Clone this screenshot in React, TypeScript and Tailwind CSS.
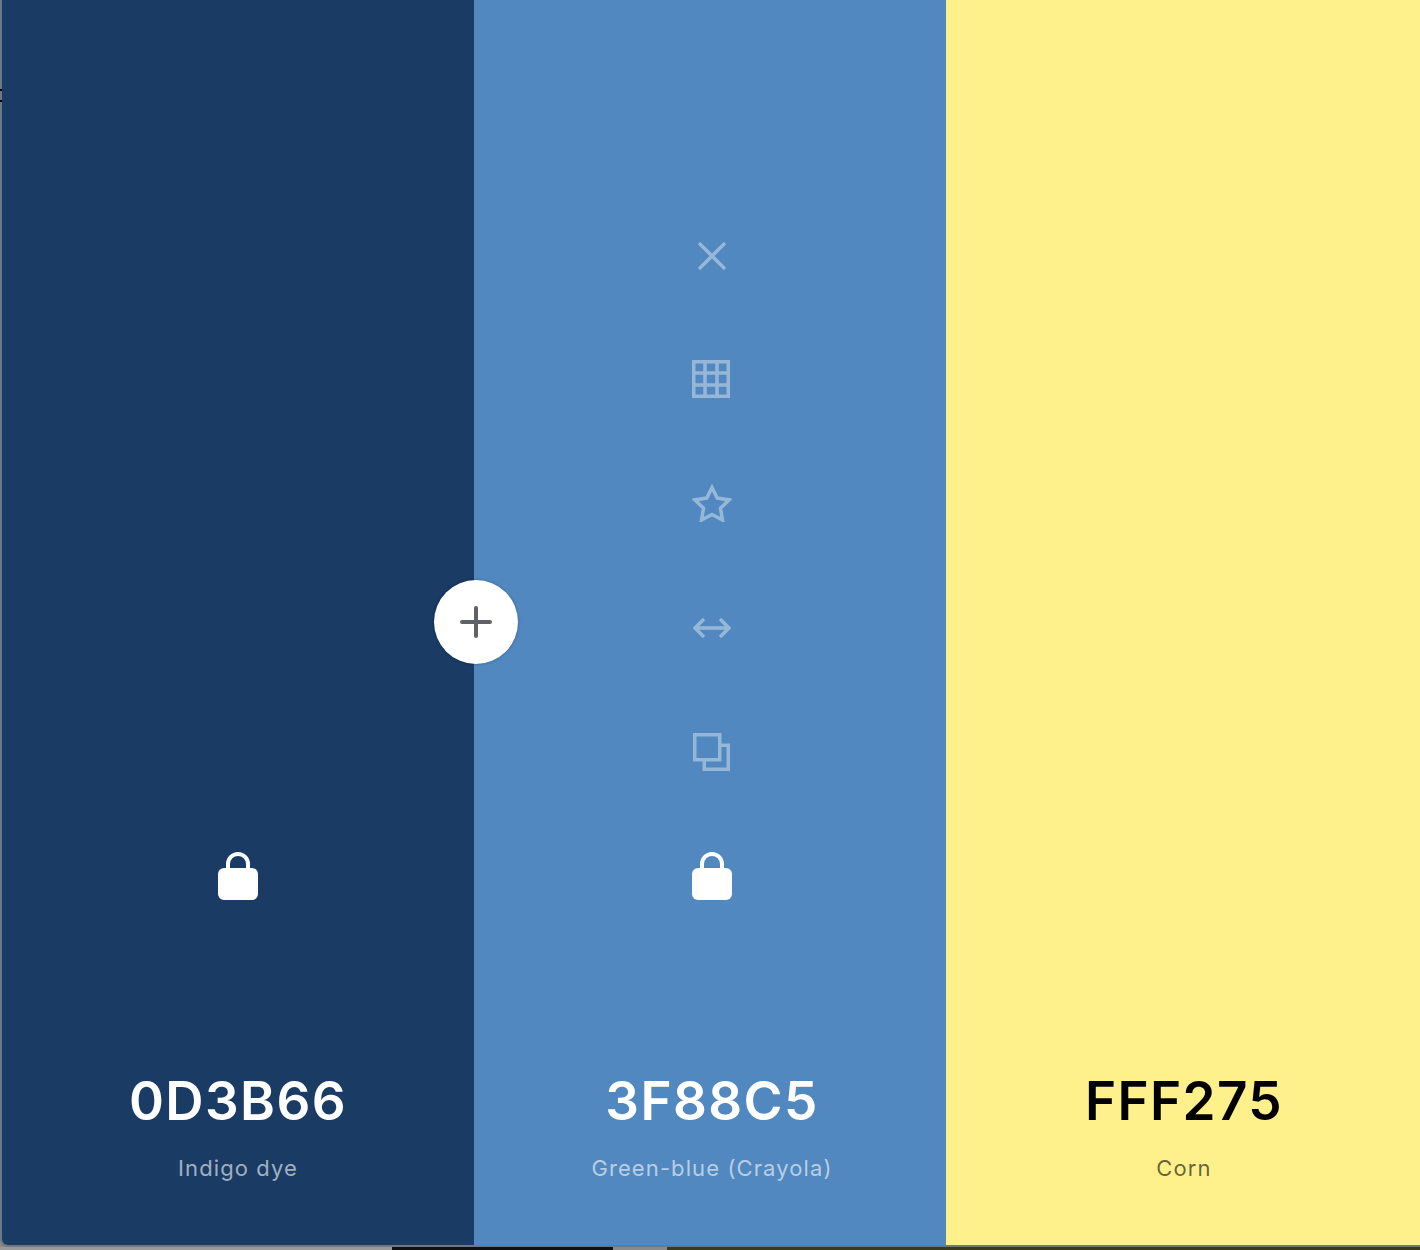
const font = { fontFamily: "Inter, sans-serif" };

const LockIcon = () => (
  <svg width="40" height="48" viewBox="0 0 40 48" className="block">
    <path d="M10 18V12a10 10 0 0 1 20 0v6" fill="none" stroke="#fff" strokeWidth="4" />
    <rect x="0" y="16" width="40" height="32" rx="6" fill="#fff" />
  </svg>
);

const tools = [
  // close
  <svg key="x" width="30" height="28" viewBox="0 0 30 28" fill="none" stroke="#fff" strokeWidth="3.500">
    <path d="M2 1l26 26M28 1L2 27" />
  </svg>,
  // grid
  <svg key="grid" width="38" height="38" viewBox="0 0 38 38" fill="none" stroke="#fff" strokeWidth="3.500" className="mr-[2px] mb-[2px]">
    <path d="M1.750 1.750h34.500v34.500H1.750zM13 1.750v34.500M25 1.750v34.500M1.750 13h34.500M1.750 25h34.500" />
  </svg>,
  // star
  <svg key="star" width="40" height="38" viewBox="0 0 40 38" fill="none" stroke="#fff" strokeWidth="3.500" className="mb-[2px]">
    <path d="M20 3.500l5.200 10.600 11.800 1.800-8.500 8.300 2 11.800L20 30.400 9.500 36l2-11.800L3 15.900l11.800-1.800z" />
  </svg>,
  // arrows
  <svg key="arrows" width="38" height="22" viewBox="0 0 38 22" fill="none" stroke="#fff" strokeWidth="3.500">
    <path d="M2 11h34M11 2l-9 9 9 9M27 2l9 9-9 9" />
  </svg>,
  // copy
  <svg key="copy" width="38" height="38" viewBox="0 0 38 38" fill="none" stroke="#fff" strokeWidth="3.500">
    <path d="M1.750 1.750h25v25h-25zM26.750 12.250h8.500v24h-24v-9.500" />
  </svg>,
];

const Column = ({
  hex,
  name,
  bg,
  dark,
  locked,
  showTools,
  inset,
}: {
  hex: string;
  name: string;
  bg: string;
  dark?: boolean;
  locked?: boolean;
  showTools?: boolean;
  inset?: string;
}) => (
  <div className={`flex flex-1 flex-col items-center justify-end pb-[61px] ${bg} ${inset ?? ""}`}>
    {showTools && (
      <div className="flex flex-col items-center opacity-40">
        {tools.map((icon, i) => (
          <div key={i} className="flex h-[124px] items-center justify-center">
            {icon}
          </div>
        ))}
      </div>
    )}
    {locked && (
      <div className={showTools ? "mt-[38px] mb-[169px]" : "mb-[169px]"}>
        <LockIcon />
      </div>
    )}
    <div
      className={`h-[64px] text-[53px] leading-[64px] font-semibold tracking-[0.026em] ${dark ? "text-black" : "text-white"}`}
    >
      {hex}
    </div>
    <div
      className={`mt-[19px] h-[32px] text-[22px] leading-[32px] tracking-[0.05em] ${dark ? "text-black/60" : "text-white/60"}`}
    >
      {name}
    </div>
  </div>
);

export default function App() {
  return (
    <div className="relative flex h-[1250px] w-[1420px] flex-col overflow-hidden bg-[#8a8a8a]" style={font}>
      <div className="flex min-h-0 flex-1 overflow-hidden rounded-bl-[8px] border-b-2 border-l-2 border-[#6f7782]">
        <div className="flex w-[472px]">
          <Column hex="0D3B66" name="Indigo dye" bg="bg-[#193b64]" locked />
        </div>
        <div className="flex w-[472px]">
          <Column hex="3F88C5" name="Green-blue (Crayola)" bg="bg-[#5088bf]" locked showTools inset="pl-[4px]" />
        </div>
        <div className="flex w-[474px]">
          <Column hex="FFF275" name="Corn" bg="bg-[#fef08a]" dark inset="pl-[2px]" />
        </div>
      </div>
      <div className="flex h-[3px] shrink-0">
        <div className="w-[392px] bg-[#9a9a9a]" />
        <div className="w-[221px] bg-[#111111]" />
        <div className="w-[54px] bg-[#8a8a8a]" />
        <div className="flex-1 bg-[#3a3a1c]" />
      </div>
      {/* stray window edge marks on the left */}
      <div className="absolute top-[89px] left-0 h-[2px] w-[2px] bg-black" />
      <div className="absolute top-[100px] left-0 h-[2px] w-[2px] bg-black" />
      <button className="absolute top-[580px] left-[434px] flex h-[84px] w-[84px] items-center justify-center rounded-full bg-white shadow-[0_0_3px_rgba(0,0,0,0.3)]">
        <svg width="32" height="32" viewBox="0 0 32 32" fill="none" stroke="#5f6068" strokeWidth="4" strokeLinecap="round">
          <path d="M16 2v28M2 16h28" />
        </svg>
      </button>
    </div>
  );
}
